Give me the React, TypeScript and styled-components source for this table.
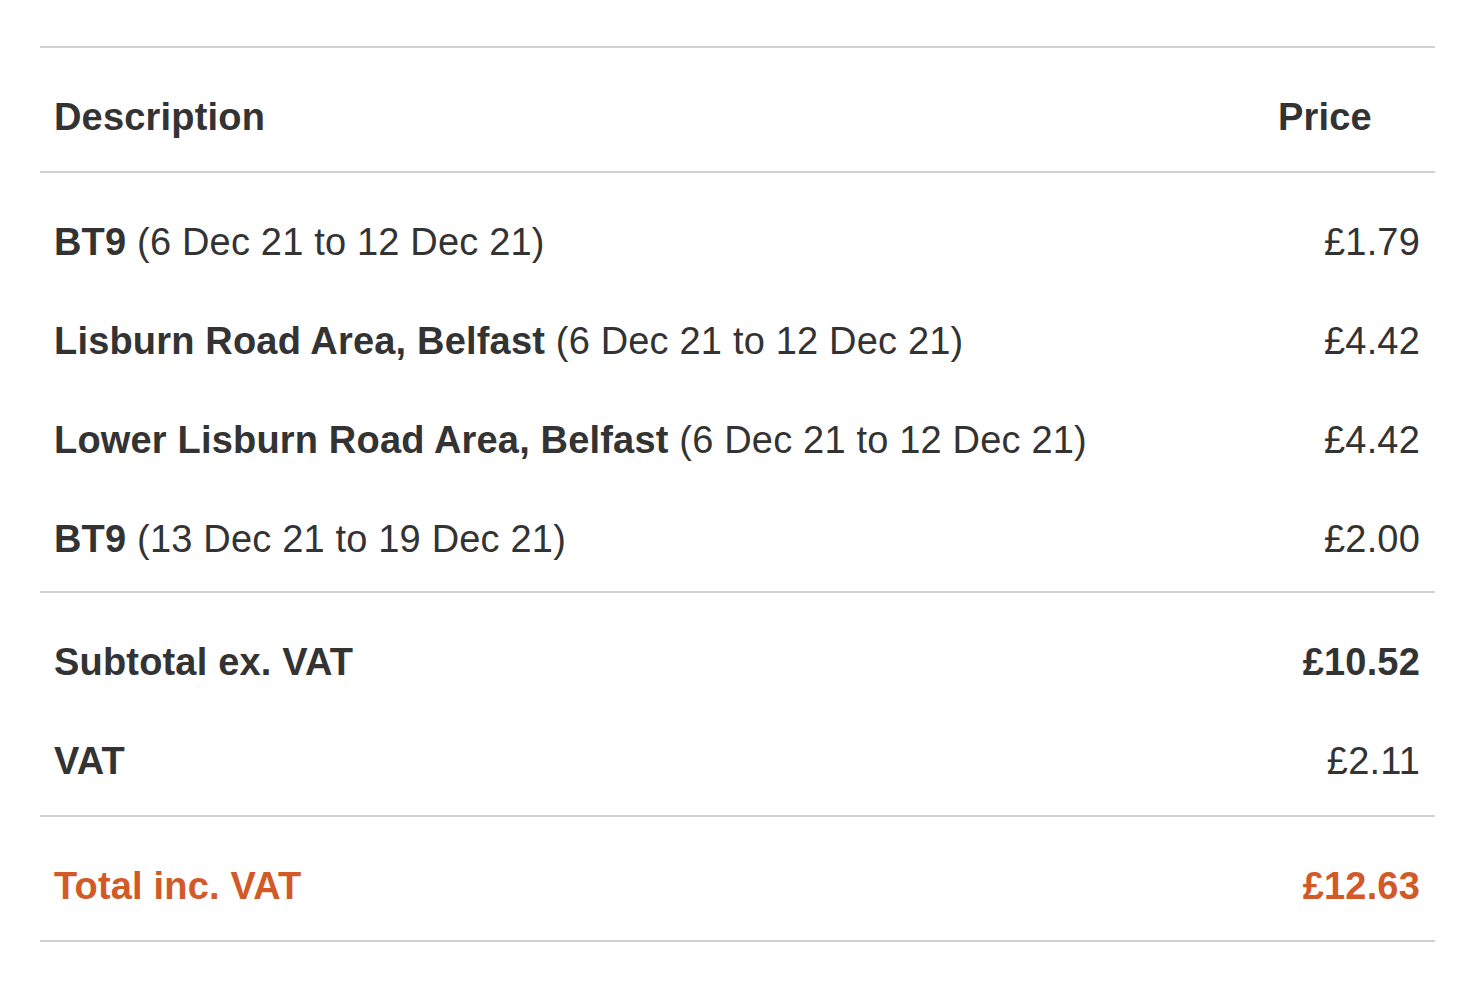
import React from "react";
import styled, { createGlobalStyle } from "styled-components";

const Global = createGlobalStyle`
  html, body { margin: 0; padding: 0; background: #ffffff; }
  body { font-family: "Liberation Sans", Arial, Helvetica, sans-serif; color: #333333; }
`;

const Table = styled.div`
  margin: 46px 0 0 40px;
  width: 1395px;
  border-bottom: 2px solid #d2d2d2;
`;

const Section = styled.div<{ $bottom?: number }>`
  display: flex;
  flex-direction: column;
  gap: 56px;
  border-top: 2px solid #d2d2d2;
  padding: 48px 15px ${(p) => p.$bottom ?? 32}px 14px;
`;

const Row = styled.div`
  display: grid;
  grid-template-columns: 1fr 142px;
  font-size: 38px;
  line-height: 43px;
  letter-spacing: 0.18px;
  white-space: nowrap;
`;

const HeadCell = styled.div`
  font-weight: 700;
  text-align: left;
`;

const Desc = styled.div<{ $bold?: boolean; $accent?: boolean }>`
  font-weight: ${(p) => (p.$bold ? 700 : 400)};
  color: ${(p) => (p.$accent ? "#d25a28" : "#333333")};
`;

const Name = styled.strong`
  font-weight: 700;
`;

const Amount = styled.div<{ $bold?: boolean; $accent?: boolean }>`
  text-align: right;
  font-weight: ${(p) => (p.$bold ? 700 : 400)};
  color: ${(p) => (p.$accent ? "#d25a28" : "#333333")};
`;

const items = [
  { name: "BT9", period: "(6 Dec 21 to 12 Dec 21)", price: "£1.79" },
  { name: "Lisburn Road Area, Belfast", period: "(6 Dec 21 to 12 Dec 21)", price: "£4.42" },
  { name: "Lower Lisburn Road Area, Belfast", period: "(6 Dec 21 to 12 Dec 21)", price: "£4.42" },
  { name: "BT9", period: "(13 Dec 21 to 19 Dec 21)", price: "£2.00" },
];

export default function App() {
  return (
    <>
      <Global />
      <Table>
        <Section>
          <Row>
            <HeadCell>Description</HeadCell>
            <HeadCell>Price</HeadCell>
          </Row>
        </Section>
        <Section $bottom={30}>
          {items.map((it, i) => (
            <Row key={i}>
              <Desc>
                <Name>{it.name}</Name> {it.period}
              </Desc>
              <Amount>{it.price}</Amount>
            </Row>
          ))}
        </Section>
        <Section>
          <Row>
            <Desc $bold>Subtotal ex. VAT</Desc>
            <Amount $bold>£10.52</Amount>
          </Row>
          <Row>
            <Desc $bold>VAT</Desc>
            <Amount>£2.11</Amount>
          </Row>
        </Section>
        <Section>
          <Row>
            <Desc $bold $accent>Total inc. VAT</Desc>
            <Amount $bold $accent>£12.63</Amount>
          </Row>
        </Section>
      </Table>
    </>
  );
}
